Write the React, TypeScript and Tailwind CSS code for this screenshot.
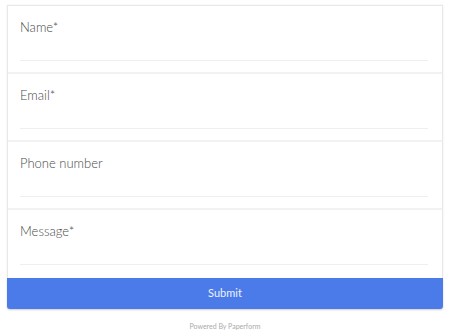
import React from "react";

const fields = ["Name*", "Email*", "Phone number", "Message*"];

const App: React.FC = () => {
  return (
    <div
      className="w-[450px] h-[335px] bg-white pt-[5px] px-[7px]"
      style={{ fontFamily: "Lato, 'Open Sans', sans-serif" }}
    >
      <div className="w-[436px] border border-[#e8e8e8] border-b-0 shadow-[0_0_2px_rgba(0,0,0,0.08)]">
        {fields.map((f, i) => (
          <div
            key={f}
            className={
              "h-[68px] px-[12px] pt-[12px] " +
              (i < fields.length - 1 ? "border-b-2 border-[#f2f2f2]" : "")
            }
          >
            <div className="text-[13px] leading-[18px] font-light text-[#4a4a4a]">{f}</div>
            <div className="h-[25px] border-b border-[#efefef] mr-[2px]" />
          </div>
        ))}
      </div>
      <button className="w-[436px] h-[31px] bg-[#4b7be8] text-[#eef2ff] text-[11px] rounded-b-[3px] shadow-[0_1px_2px_rgba(0,0,0,0.2)]">
        Submit
      </button>
      <div className="text-center text-[7px] text-[#aaa] mt-[12px]">Powered By Paperform</div>
    </div>
  );
};

export default App;
